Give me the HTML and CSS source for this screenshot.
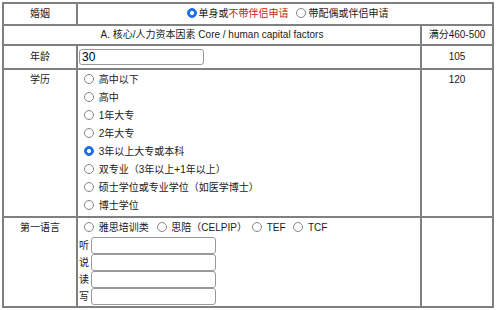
FILE: index.html
```html
<!DOCTYPE html>
<html lang="zh">
<head>
    <meta charset="UTF-8">
    <title>CRS</title>
    <link rel="stylesheet" href="styles.css">
</head>
<body>

<table class="calc">
    <colgroup>
        <col class="col-label">
        <col class="col-main">
        <col class="col-score">
    </colgroup>
    <tr class="row-marital">
        <td class="label">婚姻</td>
        <td colspan="2" class="center">
            <input type="radio" class="radio" name="marital" checked>单身或<span class="warn">不带伴侣申请</span>
            <input type="radio" class="radio" name="marital">带配偶或伴侣申请
        </td>
    </tr>
    <tr class="row-section">
        <td colspan="2" class="center">A. 核心/人力资本因素 Core / human capital factors</td>
        <td class="center">满分460-500</td>
    </tr>
    <tr class="row-age">
        <td class="label">年龄</td>
        <td><input type="text" class="field" value="30"></td>
        <td class="center">105</td>
    </tr>
    <tr class="row-list">
        <td class="label">学历</td>
        <td>
            <div class="opt"><input type="radio" class="radio" name="edu"> 高中以下</div>
            <div class="opt"><input type="radio" class="radio" name="edu"> 高中</div>
            <div class="opt"><input type="radio" class="radio" name="edu"> 1年大专</div>
            <div class="opt"><input type="radio" class="radio" name="edu"> 2年大专</div>
            <div class="opt"><input type="radio" class="radio" name="edu" checked> 3年以上大专或本科</div>
            <div class="opt"><input type="radio" class="radio" name="edu"> 双专业（3年以上+1年以上）</div>
            <div class="opt"><input type="radio" class="radio" name="edu"> 硕士学位或专业学位（如医学博士）</div>
            <div class="opt"><input type="radio" class="radio" name="edu"> 博士学位</div>
        </td>
        <td class="center">120</td>
    </tr>
    <tr class="row-list">
        <td class="label">第一语言</td>
        <td>
            <div class="opt"><input type="radio" class="radio" name="lang1"> 雅思培训类 <input type="radio" class="radio" name="lang1"> 思陪（CELPIP）<input type="radio" class="radio" name="lang1"> TEF <input type="radio" class="radio" name="lang1"> TCF</div>
            <div class="skill"><span>听</span><input type="text" class="field skill-field"></div>
            <div class="skill"><span>说</span><input type="text" class="field skill-field"></div>
            <div class="skill"><span>读</span><input type="text" class="field skill-field"></div>
            <div class="skill"><span>写</span><input type="text" class="field skill-field"></div>
        </td>
        <td></td>
    </tr>
</table>

</body>
</html>
```

FILE: styles.css
```css
body {
    margin: 2px;
    font-family: "Liberation Sans", "Noto Sans CJK SC", sans-serif;
    font-size: 10px;
    color: #1a1a1a;
    background-color: #fff;
}
.calc {
    width: 490px;
    border-collapse: collapse;
    table-layout: fixed;
}
.col-label {
    width: 74px;
}
.col-main {
    width: 344px;
}
.col-score {
    width: 72px;
}
.calc td {
    border: 2px solid #808080;
    padding: 1px;
    line-height: 18px;
    vertical-align: top;
}
.calc .label,
.calc .center {
    text-align: center;
}
.row-marital td {
    vertical-align: middle;
}
.row-section td {
    line-height: 16px;
    vertical-align: middle;
}
.row-age td {
    padding: 2px 1px;
    vertical-align: middle;
}
.warn {
    color: #c4241c;
}
.radio {
    appearance: none;
    box-sizing: border-box;
    width: 10px;
    height: 10px;
    margin: 0 2px 0 5px;
    border: 1px solid #858585;
    border-radius: 50%;
    background-color: #fff;
    vertical-align: -1px;
}
.radio:checked {
    border-color: #1e6fe8;
    background: radial-gradient(circle, #fff 0 1.6px, #1e6fe8 2.3px);
}
.field {
    box-sizing: border-box;
    display: block;
    width: 125px;
    height: 16px;
    margin: 0;
    padding: 0 2px;
    border: 1px solid #999;
    border-radius: 3px;
    font-family: "Liberation Sans", sans-serif;
    font-size: 12px;
    color: #000;
}
.skill {
    display: flex;
    align-items: center;
    gap: 2px;
    height: 17px;
}
.skill-field {
    height: 17px;
}
```
